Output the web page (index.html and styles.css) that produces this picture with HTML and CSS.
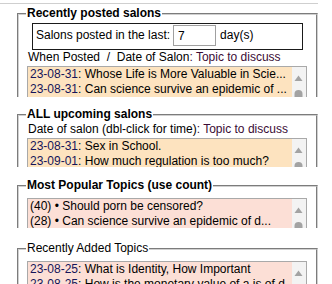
FILE: index.html
```html
<!DOCTYPE html>
<html>
<head>
<meta charset="utf-8">
<link rel="stylesheet" href="styles.css">
</head>
<body>
<div class="topbar"></div>

<div class="sec sec1">
  <fieldset class="grp">
    <legend class="lg">Recently posted salons</legend>
    <div class="daysbox">
      <span>Salons posted in the last:</span>
      <input class="days" type="text" value="7">
      <span>day(s)</span>
    </div>
    <div class="lbl">When Posted &nbsp;/&nbsp; Date of Salon<span class="tp">: Topic to discuss</span></div>
    <div class="lb peach">
      <div class="rows">
        <div class="row"><span class="dt">23-08-31</span>: Whose Life is More Valuable in Scie...</div>
        <div class="row"><span class="dt">23-08-31</span>: Can science survive an epidemic of ...</div>
      </div>
      <div class="sb"><svg width="14" height="40" viewBox="0 0 14 40"><polygon points="2.5,14 6.5,8.5 10.5,14" fill="#a3a3a3"/><rect x="2.5" y="23" width="8" height="20" rx="4" fill="#a3a3a3"/></svg></div>
    </div>
  </fieldset>
</div>

<div class="sec sec2">
  <fieldset class="grp">
    <legend class="lg">ALL upcoming salons</legend>
    <div class="lbl">Date of salon (dbl-click for time)<span class="tp">: Topic to discuss</span></div>
    <div class="lb peach">
      <div class="rows">
        <div class="row"><span class="dt">23-08-31</span>: Sex in School.</div>
        <div class="row"><span class="dt">23-09-01</span>: How much regulation is too much?</div>
      </div>
      <div class="sb"><svg width="14" height="40" viewBox="0 0 14 40"><polygon points="2.5,14 6.5,8.5 10.5,14" fill="#a3a3a3"/><rect x="2.5" y="23" width="8" height="20" rx="4" fill="#a3a3a3"/></svg></div>
    </div>
  </fieldset>
</div>

<div class="sec sec3">
  <fieldset class="grp">
    <legend class="lg">Most Popular Topics (use count)</legend>
    <div class="lb pink gap">
      <div class="rows">
        <div class="row">(40) • Should porn be censored?</div>
        <div class="row">(28) • Can science survive an epidemic of d...</div>
      </div>
      <div class="sb"><svg width="14" height="40" viewBox="0 0 14 40"><polygon points="2.5,14 6.5,8.5 10.5,14" fill="#a3a3a3"/><rect x="2.5" y="23" width="8" height="20" rx="4" fill="#a3a3a3"/></svg></div>
    </div>
  </fieldset>
</div>

<div class="sec sec4">
  <fieldset class="grp">
    <legend class="lg normal">Recently Added Topics</legend>
    <div class="lb pink gap">
      <div class="rows">
        <div class="row"><span class="dt">23-08-25</span>: What is Identity, How Important</div>
        <div class="row"><span class="dt">23-08-25</span>: How is the monetary value of a is of d...</div>
      </div>
      <div class="sb"><svg width="14" height="40" viewBox="0 0 14 40"><polygon points="2.5,14 6.5,8.5 10.5,14" fill="#a3a3a3"/><rect x="2.5" y="23" width="8" height="20" rx="4" fill="#a3a3a3"/></svg></div>
    </div>
  </fieldset>
</div>
</body>
</html>
```
FILE: styles.css
```css
html, body {
  margin: 0;
  padding: 0;
  background: #ffffff;
}
body {
  font-family: "Liberation Sans", Arial, sans-serif;
  font-size: 12px;
  line-height: 15px;
  color: #000;
  width: 332px;
  height: 284px;
  overflow: hidden;
}
.topbar {
  width: 318px;
  height: 3px;
  border-bottom: 1px solid #cfcfcf;
}
.sec {
  overflow: hidden;
}
.sec1 { margin-top: 2px; height: 91px; }
.sec2 { margin-top: 10px; height: 60px; }
.sec3 { margin-top: 11px; height: 50px; }
.sec4 { margin-top: 13px; height: 60px; }

.grp {
  margin: 0 0 0 17px;
  width: 301px;
  box-sizing: border-box;
  min-width: 0;
  padding: 0 9px 40px 8px;
  border: 2px groove #d0d0d0;
}
.lg {
  font-weight: bold;
  padding: 0 1px;
  margin-left: -1px;
  line-height: 15px;
}
.lg.normal {
  font-weight: normal;
}
.daysbox {
  margin: 2px 4px 0 5px;
  border: 1px solid #1a1a1a;
  padding: 1px 0 3px 3px;
  display: flex;
  align-items: center;
}
.days {
  box-sizing: border-box;
  width: 43px;
  height: 21px;
  margin: 0 4px 0 3px;
  padding: 0 4px;
  border: 1px solid #a0a0a0;
  font-family: "Liberation Sans", Arial, sans-serif;
  font-size: 12px;
  color: #000;
  background: #fff;
  outline: none;
}
.lbl {
  white-space: nowrap;
  padding-left: 1px;
}
.tp {
  color: #3a0c35;
}
.lb {
  margin-top: 1px;
  border: 1px solid #a9a9a9;
  display: flex;
  height: 50px;
}
.lb.gap {
  margin-top: 5px;
}
.peach .rows { background: #fde3bf; }
.pink .rows { background: #fcdfd6; }
.rows {
  flex: 1;
  min-width: 0;
  overflow: hidden;
}
.row {
  white-space: nowrap;
  overflow: hidden;
  line-height: 14px;
  padding: 0 2px 1px;
}
.dt {
  color: #15155a;
}
.sb {
  width: 14px;
  background: #f3f3f3;
}
.sb svg {
  display: block;
}
```
